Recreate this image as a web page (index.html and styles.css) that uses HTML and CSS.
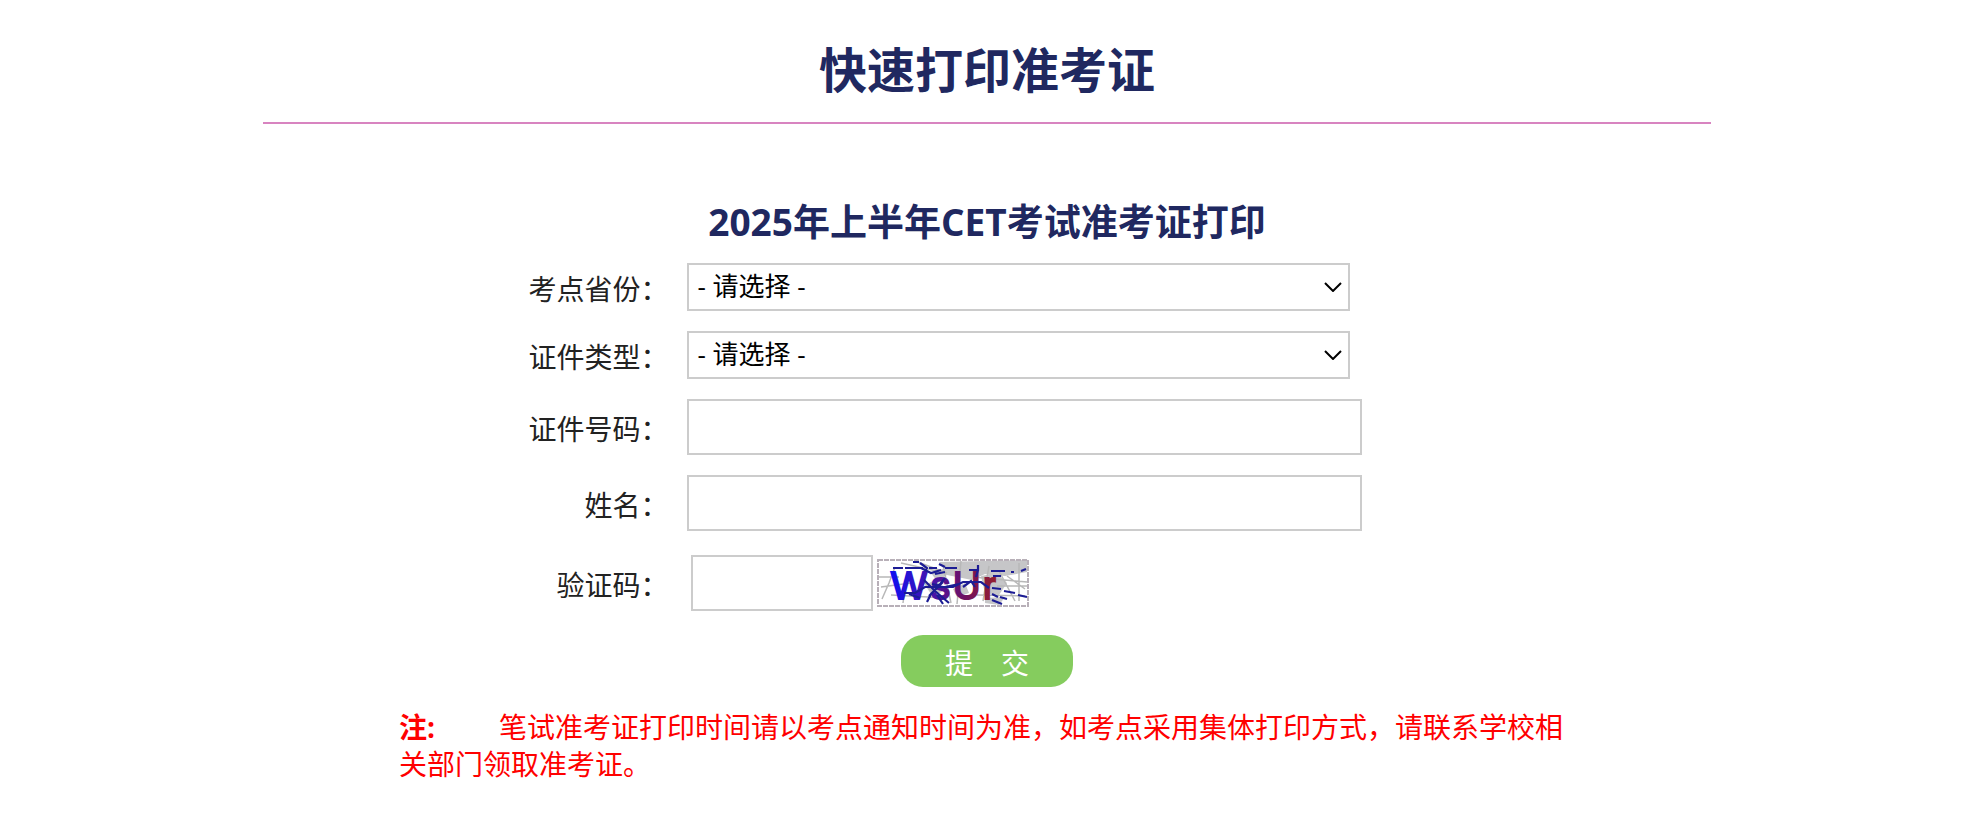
FILE: index.html
```
<!DOCTYPE html>
<html lang="zh-CN">
<head>
  <meta charset="UTF-8" />
  <meta name="viewport" content="width=device-width, initial-scale=1.0" />
  <title>快速打印准考证</title>
  <link rel="stylesheet" href="styles.css">
</head>
<body>
  <main class="page">
    <h1>快速打印准考证</h1>
    <h2>2025年上半年CET考试准考证打印</h2>

    <form id="printForm">
      <div class="row">
        <label for="province">考点省份：</label>
        <select id="province" name="province">
          <option value="">- 请选择 -</option>
        </select>
      </div>
      <div class="row">
        <label for="id_type">证件类型：</label>
        <select id="id_type" name="id_type">
          <option value="">- 请选择 -</option>
        </select>
      </div>
      <div class="row">
        <label for="id_number">证件号码：</label>
        <input type="text" id="id_number" name="id_number" />
      </div>
      <div class="row">
        <label for="name">姓名：</label>
        <input type="text" id="name" name="name" />
      </div>
      <div class="row code-row">
        <label for="code">验证码：</label>
        <div class="code">
          <input type="text" id="code" name="code" />
          <svg class="captcha" viewBox="0 0 152 48" role="img" aria-label="验证码">
            <defs>
              <linearGradient id="ink" gradientUnits="userSpaceOnUse" x1="14" y1="0" x2="120" y2="0">
                <stop offset="0" stop-color="#1010f0" />
                <stop offset="0.4" stop-color="#4a14a8" />
                <stop offset="0.7" stop-color="#701060" />
                <stop offset="1" stop-color="#96202c" />
              </linearGradient>
            </defs>
            <rect width="152" height="48" fill="#fff" />
            <path fill="#c6c6c8" d="M62 3L150 1V13L128 17L108 15L95 21L70 16L60 22L54 14L68 9ZM48 26L60 20L66 32L56 38ZM104 17L120 14L130 24L122 36L108 34ZM76 30L88 24L92 34L80 38ZM108 39L128 38L122 46L108 44Z" />
            <path fill="none" stroke="#b8b8b8" stroke-width="1.5" d="M2 18H22M4 28L34 24M14 36L70 39M18 8L12 24L5 40M30 12L26 44M38 2L70 14M24 4L60 12M44 20L64 42M66 6L74 44M84 2L80 45M96 18L150 23M100 36L148 37M112 7L106 42M122 12L138 42M142 4V42M120 27H150M130 17L148 30" />
            <text x="14 54 76 106" y="40" fill="url(#ink)" stroke="url(#ink)">WsUr</text>
            <path fill="none" stroke="#1c1c94" stroke-width="2.2" d="M16 9H26M28 9H46M52 9H60M68 9H80M36 3H42M43 4L50 9L48 12M44 9L54 14L64 11M62 5L68 8M58 15L68 13M92 11H101V6M101 11L99 18M114 12H128M116 17H124M134 13H137M144 12L149 10M27 34L38 34L48 28H76L86 23H104L112 29M115 29L124 30M127 32L138 34M141 36L150 38M47 21L58 32L72 44M50 43L54 35L66 23M68 19L60 29L52 37M55 25L68 28L82 25M60 36L66 45M115 35L121 38M123 38L130 40M115 41L125 45M32 35L43 39M86 28L94 22L98 28" />
            <rect class="captcha-edge" x="1" y="1" width="150" height="46" />
          </svg>
        </div>
      </div>
      <button type="submit">提　交</button>
    </form>

    <p class="note"><strong>注:</strong>笔试准考证打印时间请以考点通知时间为准，如考点采用集体打印方式，请联系学校相关部门领取准考证。</p>
  </main>
</body>
</html>
```
FILE: styles.css
```
* { box-sizing: border-box; }
body { margin: 0; padding: 0 12px 0 0; background: #fff; color: #222; font-family: "Open Sans", "Noto Sans CJK SC", sans-serif; font-size: 28px; }
input, select, button { font-family: inherit; }
.page { max-width: 1448px; margin: 0 auto; }
h1, h2 { margin: 0; color: #202860; font-weight: bold; text-align: center; }
h1 { height: 124px; padding-top: 34px; border-bottom: 2px solid #d884c0; font-size: 48px; line-height: 72px; }
h2 { padding: 72px 0 15px; font-size: 37px; line-height: 52px; }

form { display: flex; flex-direction: column; gap: 20px; }
.row { display: grid; grid-template-columns: 28% minmax(0, 675px); column-gap: 19px; align-items: center; }
label { padding-top: 4px; line-height: 36px; text-align: right; }
select, input { border: 2px solid #ccc; border-radius: 0; background: #fff; color: #000; font-size: 26px; }
select {
  width: calc(100% - 12px); height: 48px; padding: 0 28px 3px 8px; appearance: none;
  background: #fff url("data:image/svg+xml,%3Csvg xmlns='http://www.w3.org/2000/svg' width='18' height='10'%3E%3Cpath d='M1 1l8 8 8-8' fill='none' stroke='%23000' stroke-width='2'/%3E%3C/svg%3E") no-repeat right 6px center;
}
input { width: 100%; height: 56px; padding: 0 8px; }
.code-row { padding-top: 4px; }
.code { display: flex; align-items: center; gap: 4px; padding-left: 4px; }
.code input { width: 182px; }
.captcha { width: 152px; height: 48px; }
.captcha text { font-family: "Liberation Sans", sans-serif; font-size: 38px; stroke-width: 2; }
.captcha-edge { fill: none; stroke: #b8b0b8; stroke-width: 2; stroke-dasharray: 5 1; }
button { align-self: center; width: 172px; height: 52px; margin-top: 4px; padding: 4px 0 0; border: 0; border-radius: 22px; background: #85cc5e; color: #fff; font-size: 28px; line-height: 36px; }

.note { max-width: 1176px; margin: 22px auto 0; color: #f00; line-height: 37px; }
.note strong { margin-right: 64px; }
```
